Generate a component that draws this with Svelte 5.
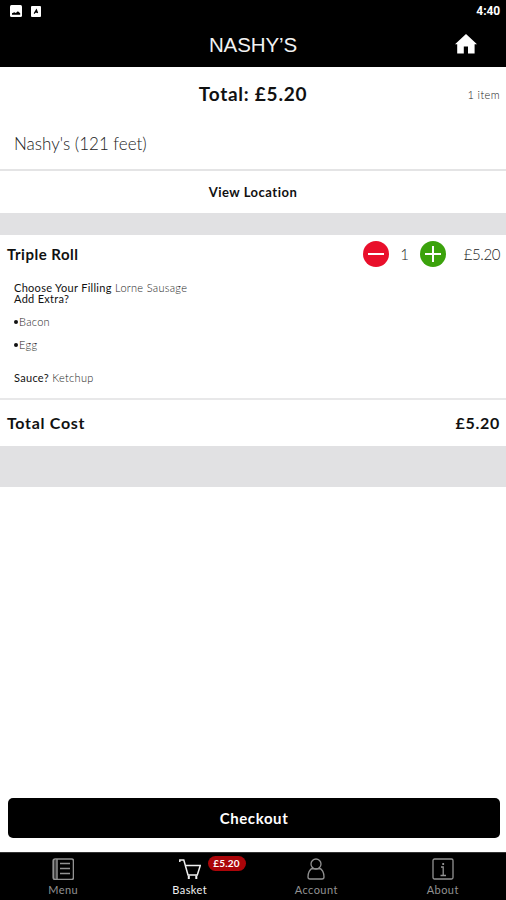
<script lang="ts">
  type Extra = { id: number; name: string };

  let active = $state("Basket");
  let qty = $state(1);

  const price = 5.2;
  const extras: Extra[] = [
    { id: 1, name: "Bacon" },
    { id: 2, name: "Egg" },
  ];
  const tabs = ["Menu", "Basket", "Account", "About"];

  let total = $derived("£" + (qty * price).toFixed(2));

  function remove() {
    if (qty > 0) qty -= 1;
  }
</script>

<div class="app">
  <header>
    <div class="status">
      <svg class="picture" viewBox="0 0 12 12">
        <rect width="12" height="12" rx="1.5" fill="#fff" />
        <path d="M2 9.7V8.2L4.3 7.2 5.8 8 7.9 6.2 10.2 8.2V9.7Z" fill="#000" />
      </svg>
      <svg class="badge" viewBox="0 0 10 11">
        <rect width="10" height="11" rx="1" fill="#fff" />
        <path d="M3.2 7.6 5.4 3.8 6.6 7M4 6.2H6.4" fill="none" stroke="#000" stroke-width="1.2" />
      </svg>
      <span class="clock">4:40</span>
    </div>
    <div class="title">
      <h1>NASHY’S</h1>
      <button class="home" aria-label="Home">
        <svg viewBox="0 0 22 20">
          <path d="M11 0 0 10.3H2.2V19.4H8.8V12.6H13V19.4H19.6V10.3H22L11 0Z" fill="#fff" />
        </svg>
      </button>
    </div>
  </header>

  <section class="summary">
    <div class="summary-row">
      <span></span>
      <strong class="total">Total: {total}</strong>
      <span class="count">{qty} item</span>
    </div>
    <div class="place">Nashy's (121 feet)</div>
  </section>
  <button class="location"><span>View Location</span></button>
  <div class="gap"></div>

  <section class="item">
    <div class="item-row">
      <span class="name">Triple Roll</span>
      <button class="round minus" onclick={remove} aria-label="Remove one">
        <svg viewBox="0 0 26 26"><path d="M5 13H21" /></svg>
      </button>
      <span class="qty">{qty}</span>
      <button class="round plus" onclick={() => (qty += 1)} aria-label="Add one">
        <svg viewBox="0 0 26 26"><path d="M5 13H21M13 5V21" /></svg>
      </button>
      <span class="price">{total}</span>
    </div>
    <div class="options">
      <div><b>Choose Your Filling</b> Lorne Sausage</div>
      <div><b>Add Extra?</b></div>
      <ul>
        {#each extras as extra (extra.id)}
          <li>{extra.name}</li>
        {/each}
      </ul>
      <div class="sauce"><b>Sauce?</b> Ketchup</div>
    </div>
  </section>

  <div class="cost">
    <span>Total Cost</span>
    <span>{total}</span>
  </div>
  <div class="gap big"></div>

  <div class="bottom">
    <button class="checkout">Checkout</button>
  </div>

  <nav>
    {#each tabs as tab}
      <button class="tab" class:active={tab === active} onclick={() => (active = tab)}>
        <svg viewBox="0 0 22 22">
          {#if tab === "Menu"}
            <rect x="1.2" y="1" width="20.3" height="20.5" rx="2" stroke-width="1.6" />
            <path d="M5 1V21.5M8 5.5H18M8 10.5H18M8 15.5H18" stroke-width="1.5" />
            <path d="M3 2V21" stroke-width="3" opacity=".45" />
          {:else if tab === "Basket"}
            <path d="M.8 4V2H4.8L9 17H18.3L21.3 7.5H6.3" stroke-width="1.5" />
            <path d="M9.8 17.5V21M17.3 17.5V21" stroke-width="2" />
          {:else if tab === "Account"}
            <circle cx="11" cy="6" r="5" />
            <path d="M7.8 9.8C4.5 11.5 3 14.5 3 19Q3 21 5 21H17Q19 21 19 19C19 14.5 17.5 11.5 14.2 9.8M7 10.8H15" />
          {:else}
            <rect x="1" y="1" width="20" height="20" rx="1.5" />
            <path d="M9 9H11.2V17.2M8.5 17.5H14" />
            <path d="M11.2 5V7" stroke-width="1.8" />
          {/if}
        </svg>
        <span class="label">{tab}</span>
        {#if tab === "Basket"}<span class="amount">{total}</span>{/if}
      </button>
    {/each}
  </nav>
</div>

<style>
  :global(body) {
    margin: 0;
    background: #fff;
  }
  *,
  *::before,
  *::after {
    box-sizing: border-box;
  }
  .app {
    width: 100%;
    height: 100vh;
    display: flex;
    flex-direction: column;
    overflow: hidden;
    background: #fff;
    color: #111;
    font-family: Lato, sans-serif;
    white-space: nowrap;
  }
  button {
    border: 0;
    padding: 0;
    background: none;
    color: inherit;
    font: inherit;
    cursor: pointer;
  }
  svg {
    display: block;
  }

  header {
    height: 67px;
    flex: none;
    background: #000;
    color: #fff;
  }
  .status {
    height: 22px;
    display: flex;
    align-items: center;
    padding: 0 6px 0 10px;
  }
  .picture {
    width: 12px;
    height: 12px;
  }
  .badge {
    width: 10px;
    height: 11px;
    margin-left: 9px;
  }
  .clock {
    margin-left: auto;
    font: bold 12px Roboto, sans-serif;
    letter-spacing: -0.1px;
  }
  .title {
    height: 45px;
    display: grid;
    grid-template-columns: 1fr auto 1fr;
    align-items: center;
  }
  h1 {
    grid-column: 2;
    margin: 0;
    font: 20.5px "Liberation Sans", sans-serif;
    letter-spacing: -0.1px;
    color: #f2f2f2;
  }
  .home {
    justify-self: end;
    margin: -2px 29px 0 0;
  }
  .home svg {
    width: 22px;
    height: 20px;
  }

  .summary {
    height: 104px;
    flex: none;
    border-bottom: 2px solid #e4e4e5;
  }
  .summary-row {
    height: 52px;
    display: grid;
    grid-template-columns: 1fr auto 1fr;
    align-items: center;
  }
  .total {
    font-size: 19px;
    letter-spacing: 0.75px;
  }
  .count {
    justify-self: end;
    padding: 2px 6px 0 0;
    font-size: 11px;
    font-weight: 300;
    letter-spacing: 0.4px;
    color: #222;
  }
  .place {
    padding: 15px 14px 0;
    font-size: 17px;
    font-weight: 300;
    line-height: 20px;
    color: #222;
  }
  .location {
    height: 42px;
    flex: none;
    font-size: 13px;
    font-weight: bold;
    letter-spacing: 0.5px;
  }
  .gap {
    height: 22px;
    flex: none;
    background: #e1e1e3;
  }
  .gap.big {
    height: 41px;
  }

  .item {
    height: 165px;
    flex: none;
    border-bottom: 2px solid #e8e8e9;
  }
  .item-row {
    height: 38px;
    display: flex;
    align-items: center;
    padding: 0 6px 0 7px;
  }
  .name {
    margin-right: auto;
    font-size: 15px;
    font-weight: bold;
    letter-spacing: 0.5px;
  }
  .round {
    width: 26px;
    height: 26px;
    border-radius: 50%;
  }
  .round path {
    stroke: #fff;
    stroke-width: 2;
  }
  .minus {
    background: #e90f2b;
  }
  .plus {
    background: #3ba20c;
  }
  .qty {
    width: 31px;
    text-align: center;
    font-size: 15px;
    font-weight: 300;
    color: #222;
  }
  .price {
    width: 54px;
    text-align: right;
    font-size: 15px;
    font-weight: 300;
    letter-spacing: -0.4px;
    color: #222;
  }
  .options {
    padding: 9px 14px 0;
    font-size: 11px;
    font-weight: 300;
    line-height: 11px;
    letter-spacing: 0.3px;
    color: #222;
  }
  .options b {
    font-weight: normal;
    color: #111;
  }
  ul {
    margin: 12px 0 0;
    padding: 0;
    list-style: none;
  }
  li {
    display: flex;
    align-items: center;
    margin-bottom: 12px;
  }
  li::before {
    content: "";
    width: 4px;
    height: 4px;
    margin-right: 1px;
    border-radius: 2px;
    background: #111;
  }
  .sauce {
    padding-top: 10px;
  }

  .cost {
    height: 46px;
    flex: none;
    display: flex;
    align-items: center;
    justify-content: space-between;
    padding: 0 6px 2px 7px;
    font-size: 16px;
    font-weight: bold;
    letter-spacing: 0.7px;
  }

  .bottom {
    margin-top: auto;
    padding: 0 6px 14px 8px;
  }
  .checkout {
    display: block;
    width: 100%;
    height: 40px;
    border-radius: 5px;
    background: #000;
    color: #fff;
    font-size: 15px;
    font-weight: bold;
    letter-spacing: 0.6px;
  }

  nav {
    height: 48px;
    flex: none;
    display: grid;
    grid-template-columns: repeat(4, 1fr);
    background: #000;
    border-top: 1px solid #333;
  }
  .tab {
    position: relative;
    display: flex;
    flex-direction: column;
    align-items: center;
    padding-top: 5px;
    color: #929292;
    font-size: 11px;
  }
  .tab.active {
    color: #f0f0f0;
  }
  .tab svg {
    width: 22px;
    height: 22px;
    fill: none;
    stroke: currentColor;
    stroke-width: 1.3;
  }
  .label {
    margin-top: 3px;
    line-height: 14px;
    letter-spacing: 0.45px;
  }
  .amount {
    position: absolute;
    left: 81px;
    top: 3px;
    width: 38px;
    height: 15px;
    border-radius: 8px;
    background: #ab0509;
    color: #fff;
    font-size: 10px;
    font-weight: bold;
    line-height: 15px;
    letter-spacing: 0.2px;
    text-align: center;
  }
</style>
